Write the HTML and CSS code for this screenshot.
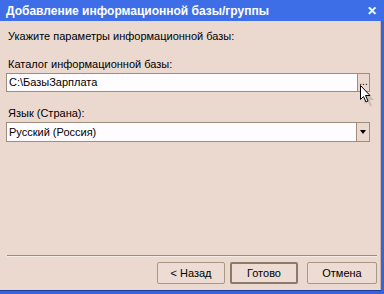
FILE: index.html
```html
<!DOCTYPE html>
<html lang="ru">
  <head>
    <meta charset="UTF-8" />
    <title>Добавление информационной базы/группы</title>
    <link rel="stylesheet" href="styles.css">
  </head>
  <body>
    <div class="window">
      <div class="titlebar">
        <span class="title">Добавление информационной базы/группы</span>
        <span class="close">✕</span>
      </div>
      <div class="client">
        <div class="label first">Укажите параметры информационной базы:</div>
        <div class="label">Каталог информационной базы:</div>
        <div class="field">
          <div class="field-text">C:\БазыЗарплата</div>
          <div class="field-btn dots">...</div>
          <svg class="cursor" width="16" height="22" viewBox="0 0 16 22">
            <path d="M2.5 3.5 L2.5 17.5 L5.5 14.5 L8 20 L10 19 L7.5 13.5 L12 13.5 Z" fill="#888" opacity="0.35" transform="translate(2 1.5)"/>
            <path d="M0.5 0.5 L0.5 14.5 L3.5 11.5 L6 17 L8 16 L5.5 10.5 L10 10.5 Z" fill="#fff" stroke="#000" stroke-width="1"/>
          </svg>
        </div>
        <div class="label">Язык (Страна):</div>
        <div class="field select">
          <div class="field-text">Русский (Россия)</div>
          <div class="field-btn"><span class="arrow"></span></div>
        </div>
        <div class="spacer"></div>
        <div class="separator"></div>
        <div class="buttons">
          <div class="btn">&lt; Назад</div>
          <div class="btn default">Готово</div>
          <div class="btn cancel">Отмена</div>
        </div>
      </div>
    </div>
  </body>
</html>
```
FILE: styles.css
```css
html,
body {
  margin: 0;
  height: 100%;
}
body {
  font-family: "Liberation Sans", Arial, sans-serif;
  font-size: 11px;
  color: #000;
}
.window {
  width: 384px;
  height: 294px;
  display: flex;
  flex-direction: column;
  background: #3a63d9;
}
.titlebar {
  height: 21px;
  flex: none;
  display: flex;
  align-items: center;
  justify-content: space-between;
  padding: 0 6px 0 6px;
  background: #3d6ee7;
  color: #fff;
}
.title {
  font-weight: bold;
  font-size: 12px;
  padding-top: 1px;
}
.close {
  font-weight: bold;
  font-size: 12px;
  margin-right: 1px;
}
.client {
  flex: 1;
  display: flex;
  flex-direction: column;
  background: #ebd9d0;
  margin-right: 3px;
  margin-bottom: 4px;
  border-right: 1px solid #c4b4ab;
  box-shadow: 0 1px 0 #1d3a9e;
  padding: 0 3px 0 6px;
}
.label {
  height: 14px;
  line-height: 14px;
  padding-left: 2px;
  margin-top: 14px;
}
.label.first {
  margin-top: 8px;
}
.field {
  position: relative;
  display: flex;
  height: 19px;
  width: 364px;
  margin-top: 2px;
  border: 1px solid #9d8d7c;
  box-sizing: border-box;
}
.field.select {
  height: 20px;
}
.field-text {
  flex: 1;
  background: #fffcff;
  line-height: 17px;
  padding-left: 2px;
}
.select .field-text {
  line-height: 18px;
}
.field-btn {
  width: 12px;
  border-left: 1px solid #9d8d7c;
  background: #ebd9d0;
  display: flex;
  align-items: center;
  justify-content: center;
}
.dots {
  font-size: 10px;
  line-height: 10px;
  align-items: flex-end;
  padding-bottom: 4px;
  box-sizing: border-box;
}
.arrow {
  width: 0;
  height: 0;
  border-left: 3.5px solid transparent;
  border-right: 3.5px solid transparent;
  border-top: 4px solid #000;
}
.cursor {
  position: absolute;
  left: 353px;
  top: 11px;
}
.spacer {
  flex: 1;
}
.separator {
  height: 1px;
  width: 370px;
  margin-left: 1px;
  background: #9f8b78;
  border-bottom: 1px solid #f6ece6;
}
.buttons {
  display: flex;
  justify-content: flex-end;
  gap: 5px;
  margin: 5px 0 6px;
}
.btn {
  width: 68px;
  height: 22px;
  box-sizing: border-box;
  border: 1px solid #a79784;
  border-radius: 2px;
  background: #ecdcd4;
  text-align: center;
  line-height: 20px;
}
.btn.default {
  border: 2px solid #8a7a6a;
  line-height: 18px;
}
.btn.cancel {
  margin-left: 4px;
  width: 70px;
}
```
